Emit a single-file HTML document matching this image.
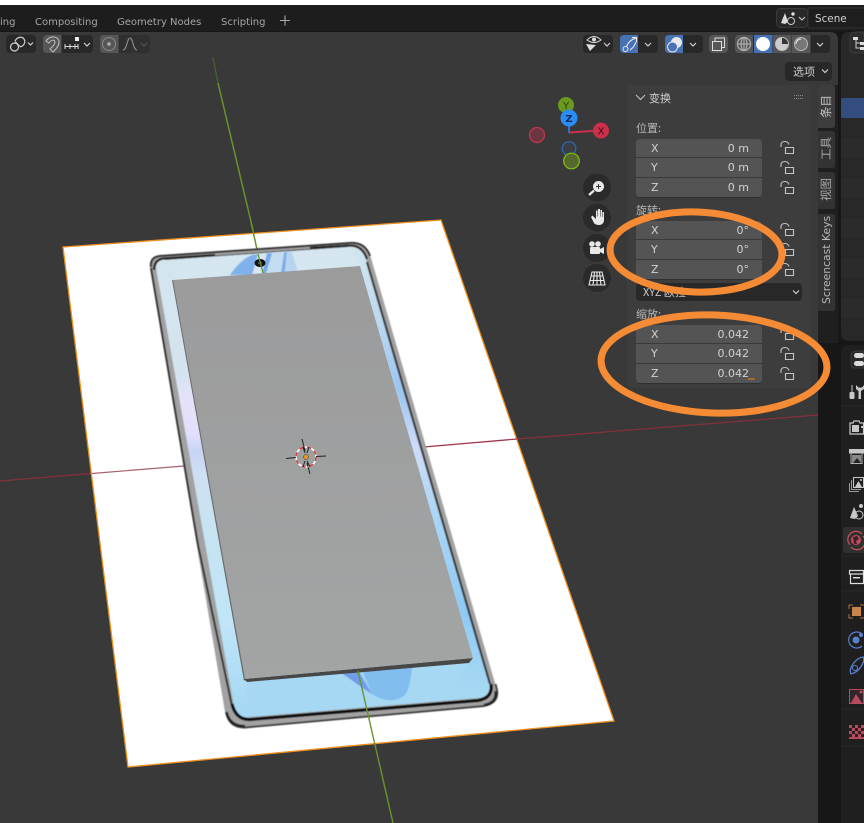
<!DOCTYPE html>
<html><head><meta charset="utf-8"><title>Blender</title>
<style>
html,body{margin:0;padding:0;background:#fff;width:864px;height:823px;overflow:hidden}
svg{display:block}
text{font-family:"DejaVu Sans","Noto Sans CJK SC",sans-serif;font-size:11px}
.cjk{font-family:"Noto Sans CJK SC","DejaVu Sans",sans-serif}
.i{fill:none;stroke:#d0d0d0;stroke-width:1.2}
.l{fill:none;stroke:#c4c4c4;stroke-width:1.1}
</style></head><body>
<svg width="864" height="823" viewBox="0 0 864 823" xmlns="http://www.w3.org/2000/svg">
<defs>
<linearGradient id="scr" x1="0" y1="250" x2="0" y2="720" gradientUnits="userSpaceOnUse">
<stop offset="0" stop-color="#d6e6f0"/><stop offset=".3" stop-color="#cde4f1"/><stop offset=".45" stop-color="#c4dff2"/><stop offset=".8" stop-color="#a9d8f4"/><stop offset="1" stop-color="#a6d8f3"/>
</linearGradient>
<linearGradient id="lft" x1="0" y1="265" x2="0" y2="710" gradientUnits="userSpaceOnUse">
<stop offset="0" stop-color="#d4e5ef"/><stop offset=".24" stop-color="#d4e4ef"/><stop offset=".3" stop-color="#e5e2fa"/><stop offset=".38" stop-color="#e2e0fc"/><stop offset=".42" stop-color="#c8d4f4"/><stop offset=".47" stop-color="#cfe0f3"/><stop offset=".6" stop-color="#c6e3f2"/><stop offset=".8" stop-color="#c0e5f7"/><stop offset="1" stop-color="#a6d8f3"/>
</linearGradient>
<linearGradient id="rgt" x1="0" y1="260" x2="0" y2="690" gradientUnits="userSpaceOnUse">
<stop offset="0" stop-color="#d0e4f0"/><stop offset=".14" stop-color="#bcd9f0"/><stop offset=".3" stop-color="#9cc6f0"/><stop offset=".44" stop-color="#cfdcf8"/><stop offset=".6" stop-color="#aad6f5"/><stop offset=".82" stop-color="#8fcaf5"/><stop offset="1" stop-color="#a6d8f3"/>
</linearGradient>
<linearGradient id="slab" x1="0" y1="270" x2="0" y2="680" gradientUnits="userSpaceOnUse">
<stop offset="0" stop-color="#9b9b9c"/><stop offset="1" stop-color="#a3a5a5"/>
</linearGradient>
<filter id="soft" x="-5%" y="-5%" width="110%" height="110%"><feGaussianBlur stdDeviation=".45"/></filter>
</defs>

<!-- base -->
<rect width="864" height="823" fill="#171717"/>
<rect width="864" height="5" fill="#ffffff"/>
<rect y="5" width="864" height="26" fill="#1d1d1d"/>

<!-- viewport -->
<path d="M0 32H830Q838 32 838 40V85H818V823H0Z" fill="#393939"/>
<rect x="818" y="85" width="20" height="258" fill="#1f1f1f"/>

<!-- right editors -->
<path d="M864 32H849Q841 32 841 40V333Q841 341 849 341H864Z" fill="#282828"/>
<rect x="841" y="98" width="23" height="20" fill="#334d80"/>
<rect x="841" y="138" width="23" height="20" fill="#2b2b2b"/>
<rect x="841" y="178" width="23" height="20" fill="#2b2b2b"/>
<rect x="841" y="218" width="23" height="20" fill="#2b2b2b"/>
<rect x="841" y="258" width="23" height="20" fill="#2b2b2b"/>
<rect x="841" y="298" width="23" height="20" fill="#2b2b2b"/>
<path d="M864 32H858Q850 32 850 36V50Q850 53 854 53H864Z" fill="#2c2c2c" stroke="#3c3c3c"/>
<path d="M856 39V48H861M856 43H861" stroke="#ccc" fill="none"/><rect x="853" y="37" width="5" height="3" fill="#ddd"/><rect x="860" y="42" width="4" height="3" fill="#ddd"/><rect x="860" y="47" width="4" height="3" fill="#ddd"/>

<path d="M864 345H849Q841 345 841 353V823H864Z" fill="#1f1f1f"/>
<path d="M864 351H858Q851 351 851 355V365Q851 368 855 368H864Z" fill="#2a2a2a" stroke="#3b3b3b"/>
<rect x="854" y="353" width="10" height="5" rx="2.500" fill="#ddd"/><rect x="854" y="361" width="10" height="5" rx="2.500" fill="#ddd"/>
<rect x="843" y="527" width="24" height="26" rx="3" fill="#303030"/>
<g stroke="#2a2a2a"><path d="M841 406H864M841 556H864M841 591H864M841 709H864M841 746H864"/></g>

<!-- side prop icons -->
<g fill="#c8c8c8">
<rect x="849.500" y="392" width="5" height="7" rx="1.200"/><rect x="851.500" y="385" width="1" height="7"/>
<path d="M856 385V389L858.500 391V399H861V391L864 389V385L862 387.500H858.500Z"/>
<path d="M850 423H853L854 421H859L860 423H863.500V434H850Z" fill="none" stroke="#c8c8c8" stroke-width="1.200"/><rect x="852" y="425" width="7" height="7"/><rect x="861" y="426" width="2" height="2"/>
<rect x="849" y="449" width="15" height="4.500"/><path d="M851 453V463.500H862V453" fill="none" stroke="#b0b0b0"/><rect x="852" y="455" width="9" height="8" fill="#888"/><path d="M853 463L857 458L861 463Z" fill="#222"/>
<rect x="853.500" y="477.500" width="10" height="10" fill="none" stroke="#c8c8c8"/><path d="M855 487L858.500 481L862 487Z"/><circle cx="861" cy="480" r="1"/><path d="M851.500 480V489.500H861" fill="none" stroke="#999"/><path d="M849.500 483V491.500H859" fill="none" stroke="#999"/>
<path d="M850 518L854 507L858 516L855 519Z"/><circle cx="861" cy="506" r="2"/><circle cx="859" cy="515" r="4" fill="none" stroke="#c8c8c8"/>
</g>
<path d="M862 534A8 8 0 0 0 850 545M851 547A8 8 0 0 0 863 536" fill="none" stroke="#c8505f" stroke-width="1.200"/>
<circle cx="856" cy="540" r="5" fill="#c44a5c"/><path d="M853 537L857 536L859 539L856 541L857 544L854 544Z" fill="#3a2226"/>
<path d="M849.500 570.500H863.500V574H849.500ZM850.500 574V583.500H863.500V574" fill="none" stroke="#dcdcdc" stroke-width="1.200"/><rect x="853" y="577" width="7" height="1.500" fill="#dcdcdc"/>
<rect x="852" y="607" width="9" height="9" fill="#c8844a"/><path d="M849 609V605H853M849 614V618H853M860 605H864M860 618H864" stroke="#a87040" fill="none"/>
<circle cx="856" cy="640" r="3.500" fill="#5a80d0"/><path d="M862 634A8 8 0 1 0 862 646" stroke="#5a80d0" fill="none" stroke-width="1.200"/><circle cx="861" cy="635" r="2" fill="#5a80d0"/>
<path d="M851 674C848 668 856 658 863 657C866 660 860 672 851 674Z" fill="none" stroke="#5a80d0" stroke-width="1.300"/><circle cx="855" cy="668" r="2.500" fill="none" stroke="#5a80d0"/>
<rect x="849.500" y="689.500" width="14" height="14" fill="#32262a" stroke="#b84a5e"/><path d="M851 703L856 694L862 703Z" fill="#b84a5e"/><circle cx="861" cy="692" r="1.500" fill="#b84a5e"/>
<rect x="849" y="725" width="15" height="14" fill="#b84a5e"/>
<g fill="#2a2022"><rect x="852" y="725" width="3" height="3"/><rect x="858" y="725" width="3" height="3"/><rect x="849" y="728" width="3" height="3"/><rect x="855" y="728" width="3" height="3"/><rect x="861" y="728" width="3" height="3"/><rect x="852" y="731" width="3" height="3"/><rect x="858" y="731" width="3" height="3"/><rect x="849" y="734" width="3" height="3"/><rect x="855" y="734" width="3" height="3"/><rect x="861" y="734" width="3" height="3"/></g>

<!-- axis lines behind -->
<path d="M213 57L218 83" stroke="#46602a" stroke-width="1.300"/>
<path d="M218 83L253 230" stroke="#6b922c" stroke-width="1.500"/>
<path d="M0 481L92 473.500" stroke="#86303f" stroke-width="1.200"/>
<path d="M517 439L818 415" stroke="#86303f" stroke-width="1.200"/>

<!-- plane -->
<polygon points="63,247 441,220 614,721 128,767" fill="#ffffff" stroke="#f0901e" stroke-width="1.300"/>
<path d="M92 473.500L190 465.500" stroke="#a7606c" stroke-width="1.200"/>
<path d="M412 448L517 439" stroke="#a2384e" stroke-width="1.300"/>
<path d="M251 222L258 254" stroke="#6b922c" stroke-width="1.500"/>

<!-- phone -->
<g filter="url(#soft)">
<path d="M160 255.500L350 242.500Q366 241.500 371 258L497 690Q500 703 484 706.500L245 728Q229 729 225 712L150 268Q148 257 160 255.500Z" fill="#a2a2a2"/>
<path d="M164 260L349 247Q362 246.500 366 260L490 684Q492 696 478 698L249 717Q237 718 234 706L156.500 270Q155 261 164 260Z" fill="url(#scr)"/>
<path d="M156.500 270Q155 261 164 260L178 259L175 282L246 680L249 717Q237 718 234 706Z" fill="url(#lft)"/>
<path d="M349 247Q362 246.500 366 260L490 684Q492 696 478 698L440 700L473 658L360 266Z" fill="url(#rgt)"/>
<path d="M151 267Q150 257 160 256L350 243Q365 242 370 256" fill="none" stroke="#333" stroke-width="2"/>
<path d="M154 270Q154 260 163 258.500L215 255" fill="none" stroke="#0c0c0c" stroke-width="2"/>
<path d="M310 248L350 245.500Q362 245 367 259" fill="none" stroke="#0c0c0c" stroke-width="2"/>
<path d="M165 259.500L348 246.500" fill="none" stroke="#444" stroke-width="1"/>
<path d="M151 268L192 510L198 545L232 706" fill="none" stroke="#333" stroke-width="2"/>
<path d="M367 262L490 684" fill="none" stroke="#383838" stroke-width="2.200"/>
<path d="M232 704Q236 720 250 719.500L478 700.500Q493 698 491 684" fill="none" stroke="#0e0e0e" stroke-width="3.200"/>
<path d="M226 712Q229 728 245 727.500L484 706Q499 703 497 690L495.500 684" fill="none" stroke="#3e3e3e" stroke-width="1.900"/>
<path d="M226.500 712Q230 726.500 245 726M495.500 691Q497 703 484 705" fill="none" stroke="#222" stroke-width="2.400"/>
</g>
<g filter="url(#soft)">
<path d="M230 275C236 266 243 259 252 255L258 254L252 275Z" fill="#7fb2ea"/>
<path d="M267 253.500L272 253L266 274L262 274Z" fill="#74a9e8"/>
<path d="M284 252L287 252L285 273L281 273Z" fill="#7db0ea"/>
<path d="M287 252L292 252L298 273L286 273Z" fill="#b7d4ee"/>
<path d="M272 253L284 252L281 273L266 274Z" fill="#c4dcf0"/>
<path d="M340 672L358 670L372 694C362 688 352 680 340 672Z" fill="#6f9ce8"/>
<path d="M362 670L413 665C410 675 412 684 405 695C395 704 380 700 372 694Z" fill="#82bdf0"/>
</g>
<ellipse cx="260" cy="263" rx="5.500" ry="4" fill="#111"/><ellipse cx="260" cy="263" rx="2" ry="1.600" fill="#3a4a55"/>
<!-- slab -->
<polygon points="172,280 176,281 246,679 244,681" fill="#6e6e6e"/>
<polygon points="244,679 473,658 469,663 247,682" fill="#474747"/>
<polygon points="173,280 360,266 473,658 245,679" fill="url(#slab)"/>
<path d="M258 254L263 273" stroke="#6b922c" stroke-width="1.300"/>
<path d="M358 671L393 823" stroke="#6b922c" stroke-width="1.400"/>
<!-- cursor -->
<circle cx="306" cy="457" r="10" fill="none" stroke="#fff" stroke-width="1.500"/>
<circle cx="306" cy="457" r="10" fill="none" stroke="#d83c3c" stroke-width="1.500" stroke-dasharray="4 4"/>
<path d="M286 458.500L296 457.500M316 456.500L326 456M302 439L305 451M307 463L310 474M303 447L305 453M309 447L307 453M303 467L305 461M310 467L307 461" stroke="#222" stroke-width="1"/>
<circle cx="306" cy="457" r="2.500" fill="#f0941e" stroke="#333" stroke-width=".5"/>

<!-- top bar text -->
<g fill="#a6a6a6">
<text x="0" y="25" style="font-size:10px">ing</text>
<text x="35" y="25" style="font-size:10px">Compositing</text>
<text x="117" y="25" style="font-size:10px">Geometry Nodes</text>
<text x="221" y="25" style="font-size:10px">Scripting</text>
</g>
<path d="M285 15.500V25.500M280 20.500H290" stroke="#aaa" stroke-width="1.100"/>

<!-- scene selector -->
<rect x="776.500" y="8.500" width="31" height="19" rx="4" fill="#282828" stroke="#3a3a3a"/>
<path d="M781 23L785 13L788 22L785 24Z" fill="#ddd"/><circle cx="793" cy="14" r="1.700" fill="#ddd"/><circle cx="791" cy="21" r="3.500" fill="none" stroke="#ccc"/>
<path d="M799 17L802 20L805 17" stroke="#ccc" fill="none" stroke-width="1.100"/>
<path d="M864 8H808V28H864" fill="#1e1e1e" stroke="#333"/>
<text x="815" y="22" fill="#d0d0d0" style="font-size:10.400px">Scene</text>

<!-- header left -->
<rect x="6" y="35" width="30" height="18" rx="4" fill="#282828"/>
<path d="M15 41C17 37 22 36 24 39C26 42 24 46 20 47" class="i"/><circle cx="14.500" cy="47" r="4" class="i"/><path d="M15 41.500L20 46.500" class="i"/>
<path d="M28 42.500L30.500 45L33 42.500" class="i"/>
<rect x="43" y="35" width="50" height="18" rx="4" fill="#282828"/>
<path d="M43 39Q43 35 47 35H61.500V53H47Q43 53 43 49Z" fill="#565656"/>
<path d="M46 41C50 35 59 36 59 42C59 46 56 49 53 52L50 49C52 47 55 45 55 42C54 39 51 40 49 43Z" fill="none" stroke="#b8b8b8" stroke-width="1.100"/>
<path d="M65 44V49M70 44V49M75 44V49M78 44V49M65 46.500H78" stroke="#ddd" fill="none"/><rect x="75" y="37" width="4" height="4" fill="#eee"/>
<path d="M84 43L87 46L90 43" class="i"/>
<rect x="100" y="35" width="50" height="18" rx="4" fill="#303030"/>
<path d="M100 39Q100 35 104 35H118.500V53H104Q100 53 100 49Z" fill="#565656"/>
<circle cx="109" cy="44" r="6.500" fill="none" stroke="#8a8a8a"/><circle cx="109" cy="44" r="1.800" fill="#b0b0b0"/>
<path d="M123 50C127 50 127 38 130 38C133 38 133 50 137 50" fill="none" stroke="#8e8e8e" stroke-width="1.100"/>
<path d="M141 43L144 46L147 43" fill="none" stroke="#555" stroke-width="1.100"/>

<!-- header right -->
<rect x="583" y="35" width="30" height="18" rx="4" fill="#282828"/>
<path d="M587 40Q594 33 601 40Q594 45 587 40Z" fill="none" stroke="#ddd"/><circle cx="594" cy="39.500" r="2" fill="#ddd"/>
<path d="M586 44L596 45L590 51Z" fill="#ddd"/>
<path d="M604 43L607 46L610 43" class="i"/>
<rect x="620" y="35" width="38" height="18" rx="4" fill="#282828"/>
<path d="M620 39Q620 35 624 35H638V53H624Q620 53 620 49Z" fill="#4772b3"/>
<path d="M626.500 46.500C628 42.500 631 39.500 636 38M632 37.500H636.500V42M630 50C633 48 635 45 636 42" fill="none" stroke="#e8e8e8" stroke-width="1.100"/><circle cx="625.500" cy="49" r="2.500" fill="none" stroke="#e8e8e8"/>
<path d="M645 43L648 46L651 43" class="i"/>
<rect x="665" y="35" width="38" height="18" rx="4" fill="#282828"/>
<path d="M665 39Q665 35 669 35H683V53H669Q665 53 665 49Z" fill="#4772b3"/>
<circle cx="676.500" cy="42.500" r="5.500" fill="#e8e8e8"/><circle cx="672.500" cy="47" r="5" fill="#4772b3" stroke="#e8e8e8"/>
<path d="M690 43L693 46L696 43" class="i"/>
<rect x="709" y="35" width="19" height="18" rx="4" fill="#565656"/>
<rect x="712.500" y="41.500" width="9" height="9" fill="none" stroke="#ddd"/><path d="M715 41V38H724.500V47.500H722" fill="none" stroke="#ddd"/>
<rect x="735" y="35" width="95" height="18" rx="4" fill="#282828"/>
<path d="M735 39Q735 35 739 35H753V53H739Q735 53 735 49Z" fill="#565656"/>
<rect x="754" y="35" width="18.500" height="18" fill="#4772b3"/>
<rect x="773" y="35" width="18.500" height="18" fill="#565656"/>
<rect x="792" y="35" width="18.500" height="18" fill="#565656"/>
<circle cx="744" cy="44" r="6.500" fill="none" stroke="#bbb"/><path d="M737.500 44H750.500M744 37.500V50.500" stroke="#bbb"/><ellipse cx="744" cy="44" rx="3" ry="6.500" fill="none" stroke="#bbb"/>
<circle cx="763" cy="44" r="7" fill="#fff"/>
<circle cx="782" cy="44" r="6.500" fill="#333" stroke="#bbb"/><path d="M782 37.500A6.500 6.500 0 0 0 782 50.500A6.500 6.500 0 0 0 788 44H782Z" fill="#ccc"/>
<circle cx="801" cy="44" r="6.500" fill="#777" stroke="#bbb"/><path d="M796 44A5 5 0 0 1 801 39" stroke="#eee" fill="none"/>
<path d="M817 43L820 46L823 43" class="i"/>
<rect x="785" y="62" width="47" height="19" rx="4" fill="#282828"/>
<text x="793" y="75.500" class="cjk" fill="#d0d0d0">选项</text>
<path d="M822 69.500L825 72.500L828 69.500" class="i"/>

<!-- gizmo -->
<circle cx="566" cy="105" r="8" fill="#6a9a1c"/>
<path d="M569 133V118M569 132.500L601 130.500" stroke="#2a8cf5" stroke-width="1.500"/><path d="M569 132.500L593 131" stroke="#cc2f4a" stroke-width="2"/>
<text x="566" y="109" text-anchor="middle" fill="#2c3a10" style="font-size:10px">Y</text>
<circle cx="569" cy="118" r="8.500" fill="#2a8cf5"/>
<text x="569" y="122" text-anchor="middle" fill="#0d2a50" style="font-size:10px;font-weight:bold">Z</text>
<circle cx="601" cy="130.500" r="8" fill="#cc2f4a"/>
<text x="601" y="134.500" text-anchor="middle" fill="#3d0c16" style="font-size:10px">X</text>
<circle cx="537" cy="135" r="7.500" fill="#6c3640" stroke="#c4384f" stroke-width="1.200"/>
<circle cx="569" cy="148.500" r="6.800" fill="#3b3f45" stroke="#2a6cb8" stroke-width="1.200"/>
<circle cx="571.500" cy="161" r="7.800" fill="#56682e" stroke="#80c012" stroke-width="1.200"/>

<!-- nav buttons -->
<g fill="#2a2a2a"><circle cx="597" cy="187.500" r="14"/><circle cx="597" cy="217.500" r="14"/><circle cx="597" cy="248" r="14"/><circle cx="597" cy="278" r="14"/></g>
<circle cx="598.500" cy="186.500" r="5.500" fill="#e8e8e8"/><path d="M596 186.500H601M598.500 184V189" stroke="#333"/><path d="M589 195L594 190.500" stroke="#e8e8e8" stroke-width="2.200"/>
<path d="M591 217L593 221C594 224 596 225 599 225C602 225 604 223 604 220V212H602.500V217H602V210H600.500V216.500H600V209H598V216.500H597.500V210.500H596V219L592.500 215.500Z" fill="#e8e8e8"/>
<rect x="590" y="247" width="10" height="7" rx="1" fill="#e8e8e8"/><circle cx="592" cy="244" r="2.800" fill="#e8e8e8"/><circle cx="598" cy="244" r="2.800" fill="#e8e8e8"/><path d="M600 249L604 247V254L600 252Z" fill="#e8e8e8"/>
<path d="M592 272H602L605 285H589ZM597 272V285M594.500 272L593 285M599.500 272L601 285M591 276H603M590 280.500H604" fill="none" stroke="#e8e8e8" stroke-width="1.100"/>

<!-- tabs -->
<path d="M818 85H832Q835 85 835 88V125Q835 128 832 128H818Z" fill="#3d3d3d"/>
<path d="M818 131H832Q835 131 835 134V165Q835 168 832 168H818Z" fill="#333"/>
<path d="M818 172H832Q835 172 835 175V206Q835 209 832 209H818Z" fill="#333"/>
<path d="M818 214H832Q835 214 835 217V308Q835 311 832 311H818Z" fill="#333"/>
<text transform="translate(830,118) rotate(-90)" class="cjk" fill="#c4c4c4" style="font-size:11.500px">条目</text>
<text transform="translate(830,160) rotate(-90)" class="cjk" fill="#aaa" style="font-size:11.500px">工具</text>
<text transform="translate(830,201) rotate(-90)" class="cjk" fill="#aaa" style="font-size:11.500px">视图</text>
<text transform="translate(830,304) rotate(-90)" fill="#b8b8b8" style="font-size:10.800px">Screencast Keys</text>

<!-- N panel -->
<rect x="627" y="85" width="184" height="303" rx="4" fill="#3d3d3d"/>
<path d="M636 95L640.500 99.500L645 95" fill="none" stroke="#c4c4c4" stroke-width="1.100"/>
<text x="649" y="102" class="cjk" fill="#d0d0d0">变换</text>
<g fill="#8c8c8c"><rect x="794" y="95" width="1" height="1"/><rect x="796" y="95" width="1" height="1"/><rect x="798" y="95" width="1" height="1"/><rect x="800" y="95" width="1" height="1"/><rect x="802" y="95" width="1" height="1"/><rect x="794" y="98" width="1" height="1"/><rect x="796" y="98" width="1" height="1"/><rect x="798" y="98" width="1" height="1"/><rect x="800" y="98" width="1" height="1"/><rect x="802" y="98" width="1" height="1"/></g>

<g fill="#b8b8b8">
<text x="636" y="132" class="cjk">位置:</text>
<text x="636" y="214" class="cjk">旋转:</text>
<text x="636" y="318" class="cjk">缩放:</text>
</g>

<rect x="636" y="139" width="126" height="58" rx="4" fill="#545454"/>
<rect x="636" y="221" width="126" height="58" rx="4" fill="#545454"/>
<rect x="636" y="325" width="126" height="58" rx="4" fill="#545454"/>
<g stroke="#3a3a3a"><path d="M636 157.500H762M636 177.500H762M636 239.500H762M636 259.500H762M636 343.500H762M636 363.500H762"/></g>
<g stroke="#2f2f2f"><path d="M638 197.500H760M638 279.500H760M638 383.500H760"/></g>
<g fill="#d2d2d2">
<text x="651" y="152">X</text><text x="651" y="171">Y</text><text x="651" y="191">Z</text>
<text x="651" y="234">X</text><text x="651" y="253">Y</text><text x="651" y="273">Z</text>
<text x="651" y="338">X</text><text x="651" y="357">Y</text><text x="651" y="377">Z</text>
<text x="749" y="152" text-anchor="end">0 m</text><text x="749" y="171" text-anchor="end">0 m</text><text x="749" y="191" text-anchor="end">0 m</text>
<text x="749" y="234" text-anchor="end">0°</text><text x="749" y="253" text-anchor="end">0°</text><text x="749" y="273" text-anchor="end">0°</text>
<text x="749" y="338" text-anchor="end">0.042</text><text x="749" y="357" text-anchor="end">0.042</text><text x="749" y="377" text-anchor="end">0.042</text>
</g>
<path d="M748 379H755" stroke="#e8842c"/>

<!-- locks -->
<g class="l">
<path d="M781 147V145Q781 141.500 785 141.500Q788 141.500 789 144.500M785.500 147.500H793.500V153.500H785.500Z"/>
<path d="M781 167V165Q781 161.500 785 161.500Q788 161.500 789 164.500M785.500 167.500H793.500V173.500H785.500Z"/>
<path d="M781 187V185Q781 181.500 785 181.500Q788 181.500 789 184.500M785.500 187.500H793.500V193.500H785.500Z"/>
<path d="M781 229V227Q781 223.500 785 223.500Q788 223.500 789 226.500M785.500 229.500H793.500V235.500H785.500Z"/>
<path d="M781 249V247Q781 243.500 785 243.500Q788 243.500 789 246.500M785.500 249.500H793.500V255.500H785.500Z"/>
<path d="M781 269V267Q781 263.500 785 263.500Q788 263.500 789 266.500M785.500 269.500H793.500V275.500H785.500Z"/>
<path d="M781 333V331Q781 327.500 785 327.500Q788 327.500 789 330.500M785.500 333.500H793.500V339.500H785.500Z"/>
<path d="M781 353V351Q781 347.500 785 347.500Q788 347.500 789 350.500M785.500 353.500H793.500V359.500H785.500Z"/>
<path d="M781 373V371Q781 367.500 785 367.500Q788 367.500 789 370.500M785.500 373.500H793.500V379.500H785.500Z"/>
</g>

<!-- dropdown -->
<rect x="636" y="283" width="166" height="18" rx="4" fill="#282828"/>
<text x="643" y="296" class="cjk" fill="#c8c8c8">XYZ 欧拉</text>
<path d="M793 290.500L796 293.500L799 290.500" class="i"/>

<!-- orange annotations -->
<ellipse cx="696" cy="252" rx="86" ry="40" transform="rotate(2 696 252)" fill="none" stroke="#f58b35" stroke-width="7"/>
<ellipse cx="714" cy="364" rx="113" ry="49" transform="rotate(2 714 364)" fill="none" stroke="#f58b35" stroke-width="7"/>
</svg>
</body></html>
